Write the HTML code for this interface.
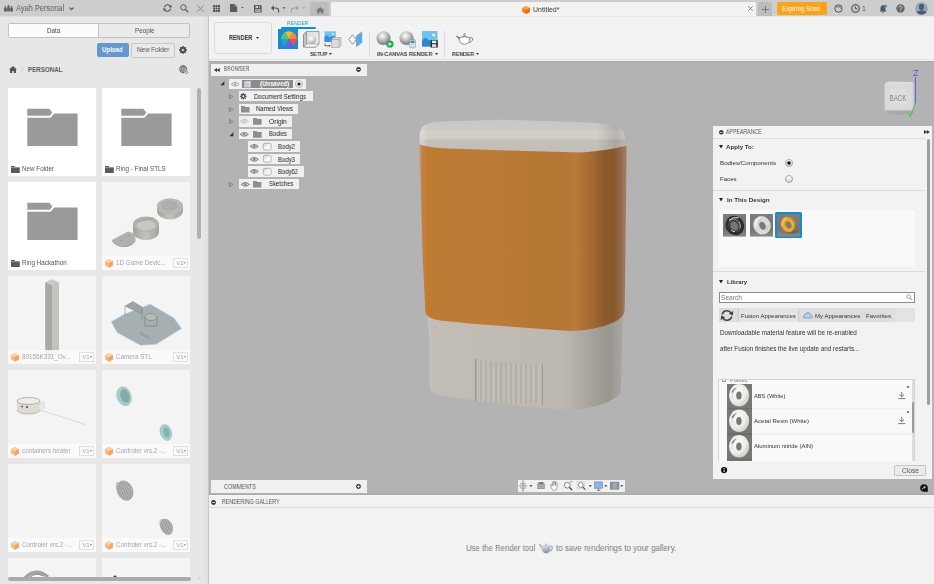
<!DOCTYPE html>
<html><head><meta charset="utf-8">
<style>
*{box-sizing:border-box;margin:0;padding:0}
html,body{width:934px;height:584px;overflow:hidden;background:#b3b3b3;font-family:"Liberation Sans",sans-serif;color:#333}
.a{position:absolute}
svg{position:absolute;overflow:visible}
.t,.lbl,.rt{will-change:transform}
.t{position:absolute;white-space:nowrap;line-height:1}
#top{left:0;top:0;width:934px;height:16px;background:#cdcdcd;box-shadow:0 1px 0 rgba(0,0,0,0.045)}
#left{left:0;top:16px;width:209px;height:568px;background:linear-gradient(to right,#e7e7e7 0,#e7e7e7 202px,#e0e0e0 208px);border-right:1px solid #c6c6c6}
#tb{left:209px;top:16px;width:725px;height:44px;background:#f2f2f2}
#vp{left:209px;top:61px;width:725px;height:434px;background:#b3b3b3}
#gal{left:209px;top:495px;width:725px;height:89px;background:#f2f2f2;border-top:1px solid #f7f7f7}
.card{position:absolute;width:88px;height:88px;background:#fff}
.card.f{background:#f4f4f4}
.card .strip{position:absolute;left:0;top:74px;width:88px;height:14px;background:#fafafa}
.lbl{position:absolute;left:14px;top:78px;font-size:6.3px;color:#444;white-space:nowrap;line-height:1}
.card.f .lbl{color:#a6a6a6}
.ver{position:absolute;left:70.6px;top:76.2px;width:15.2px;height:9.6px;border:1px solid #e0e0e0;background:#fafafa;font-size:6.2px;color:#a8a8a8;line-height:7.6px;padding-left:2.2px;will-change:transform}
.ver:after{content:"";position:absolute;right:1.6px;top:3px;border-left:1.8px solid transparent;border-right:1.8px solid transparent;border-top:2.6px solid #8a8a8a}
</style></head><body>
<!-- TOP BAR -->
<div id="top" class="a">
  <svg style="left:3.9px;top:4.6px" width="9" height="6.4" viewBox="0 0 9 6.4"><g fill="#5e5e5e"><circle cx="1.4" cy="2" r="0.95"/><circle cx="4.5" cy="1" r="1"/><circle cx="7.6" cy="2" r="0.95"/><path d="M0 3.6 Q0 3 0.6 3 H2.2 Q2.8 3 2.8 3.6 V6.4 H0 Z"/><path d="M3.1 2.6 Q3.1 2.1 3.6 2.1 H5.4 Q5.9 2.1 5.9 2.6 V6.4 H3.1 Z"/><path d="M6.2 3.6 Q6.2 3 6.8 3 H8.4 Q9 3 9 3.6 V6.4 H6.2 Z"/></g></svg>
  <div class="t" style="left:16.2px;top:3.6px;font-size:8.4px;color:#5c5c5c;transform:scaleX(0.885);transform-origin:0 0">Ayah Personal</div>
  <svg style="left:69px;top:6.5px" width="5" height="3.5" viewBox="0 0 5 3.5"><path d="M0.5 0.5 L2.5 2.7 L4.5 0.5" fill="none" stroke="#606060" stroke-width="1.2"/></svg>
  <!-- refresh -->
  <svg style="left:163px;top:4px" width="9" height="8" viewBox="0 0 9 8"><path d="M1.3 3.3 A3.3 3.3 0 0 1 7.5 2.6 M7.7 4.7 A3.3 3.3 0 0 1 1.5 5.4" fill="none" stroke="#555" stroke-width="1.1"/><path d="M8.6 1 L8.4 4 L5.8 3 Z M0.4 7 L0.6 4 L3.2 5 Z" fill="#555"/></svg>
  <!-- search -->
  <svg style="left:179.5px;top:4px" width="9" height="9" viewBox="0 0 9 9"><circle cx="3.4" cy="3.4" r="2.7" fill="none" stroke="#555" stroke-width="1"/><path d="M5.4 5.4 L8.2 8.2" stroke="#555" stroke-width="1.3"/></svg>
  <!-- close -->
  <svg style="left:197px;top:4.8px" width="7" height="7" viewBox="0 0 7 7"><path d="M0.3 0.3 L6.7 6.7 M6.7 0.3 L0.3 6.7" stroke="#777" stroke-width="0.8"/></svg>
  <!-- grid icon -->
  <svg style="left:213px;top:4.5px" width="7" height="7" viewBox="0 0 7 7"><g fill="#555"><rect x="0" y="0" width="2" height="2"/><rect x="2.5" y="0" width="2" height="2"/><rect x="5" y="0" width="2" height="2"/><rect x="0" y="2.5" width="2" height="2"/><rect x="2.5" y="2.5" width="2" height="2"/><rect x="5" y="2.5" width="2" height="2"/><rect x="0" y="5" width="2" height="2"/><rect x="2.5" y="5" width="2" height="2"/><rect x="5" y="5" width="2" height="2"/></g></svg>
  <!-- file icon -->
  <svg style="left:230px;top:4.2px" width="14" height="8.5" viewBox="0 0 14 8.5"><path d="M0 0 H4.5 L7.2 2.7 V8.1 H0 Z" fill="#5a5a5a"/><path d="M4.5 0 V2.7 H7.2" fill="#8a8a8a"/><path d="M11 2.9 H13.8 L12.4 4.5 Z" fill="#555"/></svg>
  <!-- save -->
  <svg style="left:253.7px;top:4.9px" width="8" height="7.5" viewBox="0 0 8 7.5"><path d="M0 0 H6.6 L7.7 1.1 V7.5 H0 Z" fill="#5a5a5a"/><rect x="1.6" y="0.9" width="4.2" height="2.1" fill="#cdcdcd"/><rect x="4" y="1.1" width="1.2" height="1.7" fill="#5a5a5a"/><rect x="1.3" y="4.2" width="5.2" height="2.5" fill="#cdcdcd"/><rect x="2.3" y="4.9" width="3.2" height="1.2" fill="#8a8a8a"/></svg>
  <!-- undo -->
  <svg style="left:270.8px;top:4.8px" width="16" height="8" viewBox="0 0 16 8"><path d="M1.8 3 H5 Q7.6 3 7.6 5.6 V7.6" fill="none" stroke="#555" stroke-width="1.2"/><path d="M0 3 L2.8 0.3 V5.7 Z" fill="#555"/><path d="M11.2 2.3 H14.4 L12.8 4 Z" fill="#555"/></svg>
  <!-- redo -->
  <svg style="left:291px;top:4.8px" width="16" height="8" viewBox="0 0 16 8"><path d="M6 3 H2.8 Q0.4 3 0.4 5.6 V7.4" fill="none" stroke="#9d9d9d" stroke-width="1.1"/><path d="M7.6 3 L4.9 0.4 V5.6 Z" fill="#9d9d9d"/><path d="M11.4 2.3 H14.4 L12.9 4 Z" fill="#9d9d9d"/></svg>
  <!-- home button -->
  <div class="a" style="left:309.5px;top:2.2px;width:19.5px;height:13.8px;background:#bcbcbc;border-radius:1.5px 1.5px 0 0"></div>
  <svg style="left:316.2px;top:7px" width="8.5" height="6.8" viewBox="0 0 8.5 6.8"><path d="M4.25 0 L8.5 3.4 H7.3 V6.8 H5.2 V4.9 H3.3 V6.8 H1.2 V3.4 H0 Z" fill="#787878"/></svg>
  <!-- document tab -->
  <div class="a" style="left:331.3px;top:2px;width:424.7px;height:14px;background:#f2f2f2;border-radius:2px 2px 0 0"></div>
  <svg style="left:522px;top:6px" width="8" height="8" viewBox="0 0 8 8"><path d="M4 0 L7.8 2 V6 L4 8 L0.2 6 V2 Z" fill="#ff7a1a"/><path d="M4 0 L7.8 2 L4 4 L0.2 2 Z" fill="#ffa455"/><path d="M4 4 L7.8 2 V6 L4 8 Z" fill="#f06a0a"/></svg>
  <div class="t" style="left:533px;top:6px;font-size:7px;color:#3a3a3a">Untitled*</div>
  <svg style="left:748px;top:6.4px" width="5" height="5" viewBox="0 0 5 5"><path d="M0.3 0.3 L4.7 4.7 M4.7 0.3 L0.3 4.7" stroke="#707070" stroke-width="0.85"/></svg>
  <!-- plus -->
  <div class="a" style="left:758px;top:2px;width:14px;height:14px;background:#bdbdbd;border-radius:1.5px 1.5px 0 0"></div>
  <svg style="left:761.5px;top:5.5px" width="7" height="7" viewBox="0 0 7 7"><path d="M3.5 0 V7 M0 3.5 H7" stroke="#777" stroke-width="1"/></svg>
  <!-- Expiring soon -->
  <div class="a" style="left:777px;top:2px;width:50px;height:12.5px;background:#f9a31c;border-radius:2px"></div>
  <div class="t" style="left:782.3px;top:5.6px;font-size:6.6px;color:#fff;transform:scaleX(0.93);transform-origin:0 0">Expiring Soon</div>
  <!-- right icons -->
  <svg style="left:833.5px;top:4px" width="9" height="9" viewBox="0 0 9 9"><circle cx="4.5" cy="4.5" r="3.7" fill="none" stroke="#555" stroke-width="1"/><path d="M2 2.5 Q3.5 4 5.5 2 Q6 4.5 7.5 5" fill="none" stroke="#555" stroke-width="0.8"/></svg>
  <svg style="left:850.5px;top:4px" width="9" height="9" viewBox="0 0 9 9"><circle cx="4.5" cy="4.5" r="3.8" fill="#b9b9b9" stroke="#6a6a6a" stroke-width="1.3"/><circle cx="4.5" cy="4.5" r="2.3" fill="#d5d5d5"/><path d="M4.3 2.4 V4.8 H6.4" fill="none" stroke="#444" stroke-width="1"/></svg>
  <div class="t" style="left:861.5px;top:5.3px;font-size:7px;color:#555">1</div>
  <svg style="left:878.5px;top:3.5px" width="9" height="9" viewBox="0 0 9 9"><path d="M4 1 Q1.5 1.5 1.5 4.5 V6.5 L0.5 7.5 H7.5 L6.5 6.5 V4.5 Q6.5 1.5 4 1 Z" fill="#555"/><circle cx="4" cy="8.3" r="0.8" fill="#555"/><circle cx="6.5" cy="2" r="1.5" fill="#1e9be6"/></svg>
  <svg style="left:895.5px;top:4px" width="9" height="9" viewBox="0 0 9 9"><circle cx="4.5" cy="4.5" r="4.2" fill="#666"/><path d="M3 3.4 Q3 2 4.5 2 Q6 2 6 3.3 Q6 4.2 4.6 4.8 V5.6" fill="none" stroke="#cdcdcd" stroke-width="1"/><circle cx="4.6" cy="7" r="0.6" fill="#cdcdcd"/></svg>
  <svg style="left:914.5px;top:2px" width="13" height="13" viewBox="0 0 13 13"><defs><clipPath id="av"><circle cx="6.5" cy="6.5" r="6.2"/></clipPath><radialGradient id="avg" cx="0.5" cy="0.4" r="0.6"><stop offset="0" stop-color="#a9b8cc"/><stop offset="1" stop-color="#8799b3"/></radialGradient></defs><circle cx="6.5" cy="6.5" r="6.2" fill="url(#avg)"/><g clip-path="url(#av)" fill="#4d5b72"><ellipse cx="6.5" cy="5" rx="2.6" ry="3.3"/><path d="M0.5 13.5 Q1 8.6 6.5 8.6 Q12 8.6 12.5 13.5 Z"/></g></svg>
</div>

<!-- LEFT PANEL -->
<div id="left" class="a">
  <div class="a" style="left:8px;top:7px;width:182px;height:14.5px;border:1px solid #c2c2c2;border-radius:2px;background:#ebebeb"></div>
  <div class="a" style="left:9px;top:8px;width:90px;height:12.5px;background:#fcfcfc;border-right:1px solid #c2c2c2"></div>
  <div class="t" style="left:47px;top:12px;font-size:6.3px;color:#444">Data</div>
  <div class="t" style="left:135px;top:12px;font-size:6.3px;color:#555">People</div>
  <div class="a" style="left:97px;top:26.8px;width:31.5px;height:14.6px;background:#6598cd;border-radius:2px"></div>
  <div class="t" style="left:102.4px;top:31.2px;font-size:6.9px;color:#fff;font-weight:bold;transform:scaleX(0.885);transform-origin:0 0">Upload</div>
  <div class="a" style="left:131px;top:26.5px;width:44px;height:15.3px;border:1px solid #c9c9c9;border-radius:2px;background:#e9e9e9"></div>
  <div class="t" style="left:137.2px;top:31.4px;font-size:6.6px;color:#555;transform:scaleX(0.95);transform-origin:0 0">New Folder</div>
  <!-- gear -->
  <svg style="left:179.2px;top:29.9px" width="8" height="8" viewBox="0 0 9 9"><g fill="#4a4a4a"><circle cx="4.5" cy="4.5" r="3.4"/><rect x="3.7" y="0" width="1.6" height="9"/><rect x="0" y="3.7" width="9" height="1.6"/><rect x="3.7" y="0" width="1.6" height="9" transform="rotate(45 4.5 4.5)"/><rect x="3.7" y="0" width="1.6" height="9" transform="rotate(-45 4.5 4.5)"/></g><circle cx="4.5" cy="4.5" r="1.5" fill="#e7e7e7"/><circle cx="4.5" cy="4.5" r="0.7" fill="#4a4a4a"/></svg>
  <!-- home + chevron + PERSONAL -->
  <svg style="left:8.5px;top:50px" width="8" height="7" viewBox="0 0 8 7"><path d="M4 0 L8 3.5 H7 V7 H4.8 V5 H3.2 V7 H1 V3.5 H0 Z" fill="#555"/></svg>
  <svg style="left:20px;top:50px" width="4" height="7" viewBox="0 0 4 7"><path d="M0.5 0.5 L3.2 3.5 L0.5 6.5" fill="none" stroke="#c4c4c4" stroke-width="0.9"/></svg>
  <div class="t" style="left:28px;top:50.6px;font-size:6.8px;font-weight:bold;color:#555;transform:scaleX(0.915);transform-origin:0 0">PERSONAL</div>
  <!-- globe -->
  <svg style="left:178.5px;top:49.3px" width="9.5" height="9.5" viewBox="0 0 9.5 9.5"><circle cx="4.2" cy="4.2" r="3.6" fill="none" stroke="#555" stroke-width="0.8"/><path d="M0.6 4.2 H7.8 M4.2 0.6 V7.8 M1.1 2.4 H7.3 M1.1 6 H7.3" stroke="#555" stroke-width="0.55"/><ellipse cx="4.2" cy="4.2" rx="1.7" ry="3.6" fill="none" stroke="#555" stroke-width="0.55"/><circle cx="7.3" cy="7.3" r="2" fill="#e7e7e7"/><path d="M5.8 7.3 L7.3 8.8 L8.8 7.3 L7.3 5.8 Z" fill="none" stroke="#555" stroke-width="0.7"/></svg>
  <!-- vertical scrollbar -->
  <div class="a" style="left:197px;top:72px;width:4px;height:151px;background:#b1b1b1;border-radius:2px"></div>
  <!-- horizontal scrollbar -->
</div>
<!-- CARDS -->
<div class="card" style="left:8px;top:88px">
  <svg style="left:0;top:0" width="88" height="88" viewBox="0 0 88 88"><g fill="#9a9a9a"><path d="M19.3 20.8 H41.3 L44.4 24.4 L41.9 27.8 H19.3 Z"/><path d="M19.3 29.7 H42.5 L46.2 25.5 H69.6 V57.9 H19.3 Z"/></g></svg>
  <svg style="left:3px;top:77.5px" width="9" height="7" viewBox="0 0 9 7"><path d="M0 0 H3.5 L4.3 1 H8.8 V7 H0 Z" fill="#5a5a5a"/><path d="M0 1.6 H8.8" stroke="#fff" stroke-width="0.4"/></svg>
  <div class="lbl" style="top:78.2px;color:#555">New Folder</div>
</div>
<div class="card" style="left:102px;top:88px">
  <svg style="left:0;top:0" width="88" height="88" viewBox="0 0 88 88"><g fill="#9a9a9a"><path d="M19.3 20.8 H41.3 L44.4 24.4 L41.9 27.8 H19.3 Z"/><path d="M19.3 29.7 H42.5 L46.2 25.5 H69.6 V57.9 H19.3 Z"/></g></svg>
  <svg style="left:3px;top:77.5px" width="9" height="7" viewBox="0 0 9 7"><path d="M0 0 H3.5 L4.3 1 H8.8 V7 H0 Z" fill="#5a5a5a"/><path d="M0 1.6 H8.8" stroke="#fff" stroke-width="0.4"/></svg>
  <div class="lbl" style="top:78.2px;color:#555">Ring - Final STLS</div>
</div>
<div class="card" style="left:8px;top:182px">
  <svg style="left:0;top:0" width="88" height="88" viewBox="0 0 88 88"><g fill="#9a9a9a"><path d="M19.3 20.8 H41.3 L44.4 24.4 L41.9 27.8 H19.3 Z"/><path d="M19.3 29.7 H42.5 L46.2 25.5 H69.6 V57.9 H19.3 Z"/></g></svg>
  <svg style="left:3px;top:77.5px" width="9" height="7" viewBox="0 0 9 7"><path d="M0 0 H3.5 L4.3 1 H8.8 V7 H0 Z" fill="#5a5a5a"/><path d="M0 1.6 H8.8" stroke="#fff" stroke-width="0.4"/></svg>
  <div class="lbl" style="top:78.2px;color:#555">Ring Hackathon</div>
</div>
<div class="card f" style="left:102px;top:182px">
  <svg style="left:0;top:0" width="88" height="88" viewBox="0 0 88 88">
    <defs><linearGradient id="gg" x1="0" y1="0" x2="1" y2="0"><stop offset="0" stop-color="#a3a29e"/><stop offset="0.5" stop-color="#c3c2bd"/><stop offset="1" stop-color="#a2a19d"/></linearGradient></defs>
    <path d="M55 25 A13 8 0 0 1 81 24 L81 28 A13 9 0 0 1 55 29 Z" fill="url(#gg)"/>
    <ellipse cx="68" cy="24.5" rx="13" ry="8" fill="#b9b8b4"/>
    <ellipse cx="67.5" cy="23.5" rx="8.5" ry="5.2" fill="#aeada9"/>
    <path d="M31 42 V50 A13 8 0 0 0 57 50 V42 Z" fill="url(#gg)"/>
    <ellipse cx="44" cy="42" rx="13" ry="7.5" fill="#b2b1ad"/>
    <ellipse cx="44" cy="43.5" rx="9.5" ry="5" fill="#c8c7c2"/>
    <path d="M35 40 L52 35.5" stroke="#8f8e8a" stroke-width="0.5"/>
    <path d="M10 58 L26 49.5 Q34 51 33.5 57 Q31 63 22 63.8 Q14 63.5 10 58 Z" fill="#b1b0ac"/>
    <path d="M10 58 Q14 63.5 22 63.8 Q31 63 33.5 57 L33.5 58.5 Q31 64.8 22 65 Q13 64.5 10 59 Z" fill="#959490"/>
    <circle cx="19.5" cy="58.5" r="0.6" fill="#777"/><path d="M26 54 L27.5 52.5 L28 54.5 Z" fill="#888"/>
  </svg>
  <div class="strip"></div>
  <svg style="left:3px;top:77px" width="8" height="9" viewBox="0 0 8 9"><path d="M4 0 L7.8 2.1 V6.6 L4 8.7 L0.2 6.6 V2.1 Z" fill="#fcb67c"/><path d="M4 0 L7.8 2.1 L4 4.3 L0.2 2.1 Z" fill="#fed3ab"/><path d="M4 4.3 L7.8 2.1 V6.6 L4 8.7 Z" fill="#f8a060"/></svg>
  <div class="lbl" style="top:77.6px">1D Game Devic...</div>
  <div class="ver">V2</div>
</div>
<div class="card f" style="left:8px;top:276px">
  <svg style="left:0;top:0" width="88" height="88" viewBox="0 0 88 88">
    <path d="M37.4 6.5 L44 3.5 L51 6.5 V80 H37.4 Z" fill="#b5b4b0"/>
    <path d="M37.4 6.5 L44 9.5 V80 H37.4 Z" fill="#a9a8a4"/>
    <path d="M44 9.5 L51 6.5 V80 H44 Z" fill="#c4c3bf"/>
    <path d="M37.4 6.5 L44 3.5 L51 6.5 L44 9.5 Z" fill="#c9c8c4"/>
  </svg>
  <div class="strip" style="background:rgba(250,250,250,0.9)"></div>
  <svg style="left:3px;top:77px" width="8" height="9" viewBox="0 0 8 9"><path d="M4 0 L7.8 2.1 V6.6 L4 8.7 L0.2 6.6 V2.1 Z" fill="#fcb67c"/><path d="M4 0 L7.8 2.1 L4 4.3 L0.2 2.1 Z" fill="#fed3ab"/><path d="M4 4.3 L7.8 2.1 V6.6 L4 8.7 Z" fill="#f8a060"/></svg>
  <div class="lbl" style="top:77.6px">89155K331_Ov...</div>
  <div class="ver">V1</div>
</div>
<div class="card f" style="left:102px;top:276px">
  <svg style="left:0;top:0" width="88" height="88" viewBox="0 0 88 88">
    <path d="M9.3 45.8 L23 38 L48.3 28.3 L71.7 41.9 L79.5 52.6 L54 68.2 L38.6 69.2 L15.2 56.5 Z" fill="#a6afb1" stroke="#9fd0e6" stroke-width="0.6"/>
    <path d="M23 30 L31 25.5 L40 31 V38 L31 34 Z" fill="#9fa1a2" stroke="#7d8080" stroke-width="0.4"/>
    <path d="M23 30 V40 M40 31 V44" stroke="#7d8080" stroke-width="0.5"/>
    <ellipse cx="49" cy="41" rx="6" ry="3.5" fill="#b9bbbb" stroke="#6f7272" stroke-width="0.5"/>
    <path d="M43 41 V50 H55 V41" fill="none" stroke="#6f7272" stroke-width="0.5"/>
    <path d="M38 56 L48 61 M38 58 L48 63" stroke="#7d8080" stroke-width="0.5"/>
  </svg>
  <div class="strip"></div>
  <svg style="left:3px;top:77px" width="8" height="9" viewBox="0 0 8 9"><path d="M4 0 L7.8 2.1 V6.6 L4 8.7 L0.2 6.6 V2.1 Z" fill="#fcb67c"/><path d="M4 0 L7.8 2.1 L4 4.3 L0.2 2.1 Z" fill="#fed3ab"/><path d="M4 4.3 L7.8 2.1 V6.6 L4 8.7 Z" fill="#f8a060"/></svg>
  <div class="lbl" style="top:77.6px">Camera STL</div>
  <div class="ver">V1</div>
</div>
<div class="card f" style="left:8px;top:370px">
  <svg style="left:0;top:0" width="88" height="88" viewBox="0 0 88 88">
    <path d="M32 40 L78 54.6" stroke="#d2d2d2" stroke-width="0.8"/>
    <path d="M9 31 V40 A11.5 4 0 0 0 32 40 V31 Z" fill="#dedbd5"/>
    <ellipse cx="20.5" cy="31" rx="11.5" ry="3.5" fill="#eeece8" stroke="#8d8b86" stroke-width="0.6"/>
    <path d="M9 40 A11.5 4 0 0 0 32 40" fill="none" stroke="#9b9994" stroke-width="0.6"/>
    <rect x="32" y="31" width="5" height="8" fill="#e6e6e6"/>
    <circle cx="14" cy="36.5" r="0.9" fill="#555"/><circle cx="19" cy="37" r="1.1" fill="#555"/>
  </svg>
  <div class="strip"></div>
  <svg style="left:3px;top:77px" width="8" height="9" viewBox="0 0 8 9"><path d="M4 0 L7.8 2.1 V6.6 L4 8.7 L0.2 6.6 V2.1 Z" fill="#fcb67c"/><path d="M4 0 L7.8 2.1 L4 4.3 L0.2 2.1 Z" fill="#fed3ab"/><path d="M4 4.3 L7.8 2.1 V6.6 L4 8.7 Z" fill="#f8a060"/></svg>
  <div class="lbl" style="top:77.6px">containers heater</div>
  <div class="ver">V1</div>
</div>
<div class="card f" style="left:102px;top:370px">
  <svg style="left:0;top:0" width="88" height="88" viewBox="0 0 88 88">
    <ellipse cx="22" cy="26.3" rx="7.5" ry="10" transform="rotate(-20 22 26.3)" fill="#a3cdca"/>
    <ellipse cx="23" cy="26" rx="4.5" ry="7" transform="rotate(-20 23 26)" fill="#6f9593" opacity="0.6"/>
    <ellipse cx="63.9" cy="62.4" rx="6" ry="8.5" transform="rotate(-20 63.9 62.4)" fill="#a3cdca"/>
    <ellipse cx="64.5" cy="62.4" rx="3" ry="5" transform="rotate(-20 64.5 62.4)" fill="#6f9593" opacity="0.5"/>
  </svg>
  <div class="strip"></div>
  <svg style="left:3px;top:77px" width="8" height="9" viewBox="0 0 8 9"><path d="M4 0 L7.8 2.1 V6.6 L4 8.7 L0.2 6.6 V2.1 Z" fill="#fcb67c"/><path d="M4 0 L7.8 2.1 L4 4.3 L0.2 2.1 Z" fill="#fed3ab"/><path d="M4 4.3 L7.8 2.1 V6.6 L4 8.7 Z" fill="#f8a060"/></svg>
  <div class="lbl" style="top:77.6px">Controler vrs.2 -...</div>
  <div class="ver">V1</div>
</div>
<div class="card f" style="left:8px;top:464px">
  <div class="strip"></div>
  <svg style="left:3px;top:77px" width="8" height="9" viewBox="0 0 8 9"><path d="M4 0 L7.8 2.1 V6.6 L4 8.7 L0.2 6.6 V2.1 Z" fill="#fcb67c"/><path d="M4 0 L7.8 2.1 L4 4.3 L0.2 2.1 Z" fill="#fed3ab"/><path d="M4 4.3 L7.8 2.1 V6.6 L4 8.7 Z" fill="#f8a060"/></svg>
  <div class="lbl" style="top:77.6px">Controler vrs.2 -...</div>
  <div class="ver">V1</div>
</div>
<div class="card f" style="left:102px;top:464px">
  <svg style="left:0;top:0" width="88" height="88" viewBox="0 0 88 88">
    <defs><pattern id="gear" width="2.2" height="2.2" patternUnits="userSpaceOnUse"><rect width="2.2" height="2.2" fill="#9a9a9a"/><circle cx="1.1" cy="1.1" r="0.65" fill="#c9c9c9"/></pattern></defs>
    <ellipse cx="17.5" cy="24" rx="3" ry="6.5" transform="rotate(-25 17.5 24)" fill="#a9d3ea"/>
    <ellipse cx="23" cy="26.6" rx="8" ry="10.5" transform="rotate(-25 23 26.6)" fill="url(#gear)"/>
    <ellipse cx="62" cy="62" rx="4" ry="7.5" transform="rotate(-25 62 62)" fill="#a9d3ea"/>
    <ellipse cx="64.6" cy="62.8" rx="6" ry="8.5" transform="rotate(-25 64.6 62.8)" fill="url(#gear)"/>
  </svg>
  <div class="strip"></div>
  <svg style="left:3px;top:77px" width="8" height="9" viewBox="0 0 8 9"><path d="M4 0 L7.8 2.1 V6.6 L4 8.7 L0.2 6.6 V2.1 Z" fill="#fcb67c"/><path d="M4 0 L7.8 2.1 L4 4.3 L0.2 2.1 Z" fill="#fed3ab"/><path d="M4 4.3 L7.8 2.1 V6.6 L4 8.7 Z" fill="#f8a060"/></svg>
  <div class="lbl" style="top:77.6px">Controler vrs.2 -...</div>
  <div class="ver">V1</div>
</div>
<div class="card f" style="left:8px;top:558px;height:19px;overflow:hidden">
  <svg style="left:0;top:0" width="88" height="30" viewBox="0 0 88 30"><path d="M17 20 Q28 9 40 19" fill="none" stroke="#a3a29e" stroke-width="3.2"/><path d="M22 19 Q28 14 35 18" fill="none" stroke="#8c8b87" stroke-width="1"/></svg>
</div>
<div class="card f" style="left:102px;top:558px;height:19px;overflow:hidden">
  <svg style="left:0;top:0" width="88" height="30" viewBox="0 0 88 30"><ellipse cx="13" cy="18.5" rx="1.5" ry="1" fill="#444"/></svg>
</div>
<div class="a" style="left:8px;top:576.5px;width:183px;height:4.5px;background:#ababab;border-radius:2px"></div>
<div class="a" style="left:198px;top:577px;width:3px;height:3px;background:#dcdcdc"></div>


<!-- TOOLBAR -->
<div id="tb" class="a">
  <div class="a" style="left:5px;top:6px;width:57.5px;height:32px;border:1px solid #dadada;border-radius:2.5px"></div>
</div>
<div class="a" style="left:209px;top:59px;width:725px;height:1px;background:#e4e4e4"></div><div class="a" style="left:209px;top:60px;width:725px;height:1px;background:#f5f5f5"></div>
<div class="t" style="left:228.8px;top:34.6px;font-size:6.5px;color:#333;font-weight:bold;transform:scaleX(0.85);transform-origin:0 0">RENDER</div>
<svg style="left:255.5px;top:37.3px" width="3" height="2" viewBox="0 0 3 2"><path d="M0 0 H3 L1.5 2 Z" fill="#333"/></svg>
<div class="t" style="left:286.9px;top:19.6px;font-size:6.2px;color:#1f9ad8;transform:scaleX(0.82);transform-origin:0 0">RENDER</div>
<div class="a" style="left:281px;top:27px;width:34.5px;height:1.8px;background:#0a8fd6;border-radius:1px"></div>
<div class="a" style="left:278px;top:29px;width:20px;height:20px;background:#1a8ad4"></div>
<svg style="left:280.5px;top:31.3px" width="16" height="16" viewBox="-8 -8 16 16">
  <path d="M0 0 L-6.67 -3.85 A7.7 7.7 0 0 1 -3.85 -6.67 Z" fill="#5cc375"/>
  <path d="M0 0 L0 -7.7 A7.7 7.7 0 0 1 0 -7.7 Z" fill="#5cc375"/>
  <path d="M0 0 L-3.85 -6.67 A7.7 7.7 0 0 1 3.85 -6.67 Z" fill="#f8b832"/>
  <path d="M0 0 L3.85 -6.67 A7.7 7.7 0 0 1 7.7 0 Z" fill="#f5883a"/>
  <path d="M0 0 L7.7 0 A7.7 7.7 0 0 1 3.85 6.67 Z" fill="#e35454"/>
  <path d="M0 0 L3.85 6.67 A7.7 7.7 0 0 1 -3.85 6.67 Z" fill="#7d55e6"/>
  <path d="M0 0 L-3.85 6.67 A7.7 7.7 0 0 1 -7.7 0 Z" fill="#1fa9c0"/>
  <path d="M0 0 L-7.7 0 A7.7 7.7 0 0 1 -3.85 -6.67 Z" fill="#5cc375"/>
</svg>
<!-- sphere in box -->
<svg style="left:302.5px;top:30.5px" width="17" height="17" viewBox="0 0 17 17">
  <defs><radialGradient id="sph" cx="0.4" cy="0.35" r="0.7"><stop offset="0" stop-color="#fff"/><stop offset="0.6" stop-color="#d5d5d5"/><stop offset="1" stop-color="#9a9a9a"/></radialGradient>
  <linearGradient id="wall" x1="0" y1="0" x2="1" y2="1"><stop offset="0" stop-color="#d8d8d8"/><stop offset="1" stop-color="#f2f2f2"/></linearGradient></defs>
  <path d="M3.5 0.5 H16 V13 L13 16 H0.5 V3.5 Z" fill="url(#wall)" stroke="#6d6d6d" stroke-width="0.6"/>
  <path d="M0.5 3.5 L3.5 0.5 V13 L0.5 16 Z" fill="#c4c4c4" stroke="#6d6d6d" stroke-width="0.5"/>
  <path d="M3.5 13 H16 L13 16 H0.5 Z" fill="#fafafa" stroke="#6d6d6d" stroke-width="0.5"/>
  <circle cx="8.6" cy="8.5" r="4.4" fill="url(#sph)"/>
</svg>
<!-- image + cube -->
<svg style="left:324px;top:30.5px" width="18" height="17" viewBox="0 0 18 17">
  <rect x="0.5" y="0.3" width="11.2" height="10.7" fill="#6cc4f4"/>
  <path d="M0.5 6 Q2.5 3.5 4.5 5.5 Q6 7 8 5.5 Q10 4.5 11.7 6.5 V11 H0.5 Z" fill="#3b8fd2"/>
  <circle cx="8.8" cy="3" r="1.1" fill="#f8eea0"/>
  <path d="M7.5 8.5 L9.5 6.5 H17 V14.5 L15 16.5 H7.5 Z" fill="#dcdcdc" stroke="#8c8c8c" stroke-width="0.5"/>
  <path d="M7.5 8.5 H15 V16.5 M15 8.5 L17 6.5" fill="none" stroke="#8c8c8c" stroke-width="0.5"/>
  <path d="M1 12.5 V14.8 H5.5" fill="none" stroke="#333" stroke-width="0.7"/><path d="M5 13.8 L6.5 14.8 L5 15.8 Z" fill="#333"/>
</svg>
<!-- diamond + plane -->
<svg style="left:348px;top:30.5px" width="15" height="17" viewBox="0 0 15 17">
  <path d="M0.7 8.5 L4.5 3.8 L8.3 8.5 L4.5 13.2 Z" fill="#f4f4f4" stroke="#555" stroke-width="0.6"/>
  <path d="M8 5 L14.2 0.3 V11.8 L8 16.3 Z" fill="#62a9e0"/>
</svg>
<div class="t" style="left:309.8px;top:50.9px;font-size:6.1px;color:#3a3a3a;font-weight:bold;transform:scaleX(0.86);transform-origin:0 0">SETUP</div>
<svg style="left:328.5px;top:52.6px" width="3" height="2" viewBox="0 0 3 2"><path d="M0 0 H3 L1.5 2 Z" fill="#333"/></svg>
<div class="a" style="left:369px;top:31px;width:1px;height:26px;background:#dcdcdc"></div>
<!-- spheres -->
<svg style="left:375.5px;top:30.5px" width="17" height="17" viewBox="0 0 17 17">
  <defs><radialGradient id="sph2" cx="0.42" cy="0.32" r="0.7"><stop offset="0" stop-color="#ffffff"/><stop offset="0.35" stop-color="#d0d0d0"/><stop offset="0.8" stop-color="#8d8d8d"/><stop offset="1" stop-color="#9c9c9c"/></radialGradient></defs>
  <circle cx="7.5" cy="7.3" r="7" fill="url(#sph2)"/>
  <circle cx="13.9" cy="13.1" r="3.7" fill="#1fae4b"/>
  <path d="M12.6 11.2 L15.9 13.1 L12.6 15 Z" fill="#fff"/>
</svg>
<svg style="left:398.5px;top:30.5px" width="17" height="17" viewBox="0 0 17 17">
  <circle cx="7.5" cy="7.3" r="7" fill="url(#sph2)"/>
  <rect x="10.8" y="8.5" width="5.6" height="8.3" rx="0.8" fill="#eee" stroke="#777" stroke-width="0.5"/>
  <rect x="11.6" y="9.5" width="4" height="2.6" fill="#1e96e0"/>
  <path d="M12.5 13.5 H14.7 M12.5 15 H14.7" stroke="#777" stroke-width="0.4"/>
</svg>
<svg style="left:421.5px;top:30.5px" width="17" height="17" viewBox="0 0 17 17">
  <rect x="0" y="0" width="15.5" height="15.5" fill="#6cc4f4"/>
  <path d="M0 10 Q2.5 5 5.5 8 Q7 10 8.5 9 V15.5 H0 Z" fill="#2f87cd"/>
  <circle cx="11.7" cy="4" r="1.6" fill="#f8f0a8"/>
  <rect x="8.5" y="9.2" width="7.3" height="7.3" fill="#2a2a2a"/>
  <rect x="10" y="9.7" width="4.3" height="2.5" fill="#eee"/>
  <rect x="10" y="13.3" width="4.3" height="2.5" fill="#eee"/>
</svg>
<div class="t" style="left:376.8px;top:50.9px;font-size:6.1px;color:#3a3a3a;font-weight:bold;transform:scaleX(0.91);transform-origin:0 0">IN-CANVAS RENDER</div>
<svg style="left:434.7px;top:52.6px" width="3" height="2" viewBox="0 0 3 2"><path d="M0 0 H3 L1.5 2 Z" fill="#333"/></svg>
<div class="a" style="left:444px;top:31px;width:1px;height:26px;background:#dcdcdc"></div>
<!-- teapot -->
<svg style="left:456px;top:32.5px" width="18" height="12" viewBox="0 0 18 12">
  <path d="M3 4.5 Q2.5 10.5 8.5 11.3 Q14 10.8 13.8 4.5 Q8.5 3 3 4.5 Z" fill="#fff" stroke="#444" stroke-width="0.6"/>
  <path d="M3.3 5.5 Q0.5 4 0.5 3 Q2.5 3 3.5 6" fill="none" stroke="#444" stroke-width="0.6"/>
  <path d="M13.8 5 Q17.5 4 16.5 7 Q15.5 9 13 10" fill="none" stroke="#444" stroke-width="0.6"/>
  <path d="M6.5 3.8 Q8.5 1.5 10.5 3.8" fill="none" stroke="#444" stroke-width="0.6"/>
  <circle cx="8.5" cy="1.3" r="0.8" fill="none" stroke="#444" stroke-width="0.5"/>
</svg>
<div class="t" style="left:451.9px;top:50.9px;font-size:6.1px;color:#3a3a3a;font-weight:bold;transform:scaleX(0.86);transform-origin:0 0">RENDER</div>
<svg style="left:475.7px;top:52.6px" width="3" height="2" viewBox="0 0 3 2"><path d="M0 0 H3 L1.5 2 Z" fill="#333"/></svg>

<!-- VIEWPORT -->
<div id="vp" class="a"></div>
<div class="a" style="left:209px;top:61px;width:725px;height:1px;background:#a9a9a9"></div>
<!-- browser header -->
<div class="a" style="left:211px;top:63.5px;width:156px;height:12.3px;background:#f0f0f0"></div>
<svg style="left:213.5px;top:68px" width="6" height="4" viewBox="0 0 6 4"><path d="M0 2 L3 0 V4 Z M2.8 2 L5.8 0 V4 Z" fill="#333"/></svg>
<div class="t" style="left:223.7px;top:66.3px;font-size:6.3px;color:#555;transform:scaleX(0.78);transform-origin:0 0">BROWSER</div>
<svg style="left:355.6px;top:67.2px" width="5" height="5" viewBox="0 0 5 5"><circle cx="2.5" cy="2.5" r="2.4" fill="#333"/><rect x="1.1" y="2.1" width="2.8" height="0.8" fill="#fff"/></svg>
<!-- tree rows -->
<style>
.row{position:absolute;background:#f0f0f0;height:10.3px}
.rt{position:absolute;font-size:6.1px;color:#333;white-space:nowrap;line-height:1}
.eye{position:absolute}
</style>
<!-- root -->
<svg style="left:220px;top:81.2px" width="5" height="5" viewBox="0 0 5 5"><path d="M4.3 0.3 V4.3 H0.3 Z" fill="#333"/></svg>
<div class="row" style="left:229px;top:78.8px;width:77px;height:10.1px"></div>
<svg style="left:231px;top:81.8px" width="8.5" height="4.5" viewBox="0 0 8.5 4.5"><path d="M0.4 2.25 Q4.25 -1.4 8.1 2.25 Q4.25 5.9 0.4 2.25 Z" fill="none" stroke="#9a9a9a" stroke-width="0.9"/><circle cx="4.25" cy="2.25" r="1.1" fill="#9a9a9a"/></svg>
<div class="a" style="left:242px;top:80px;width:51px;height:7.7px;background:#8b8b8b"></div>
<svg style="left:244.2px;top:80.8px" width="7" height="6.5" viewBox="0 0 7 6.5"><path d="M1.2 0 H6.8 V5.3 L5.6 6.5 H0 V1.2 Z" fill="#c5cad6"/><path d="M0 1.2 H5.6 V6.5 M5.6 1.2 L6.8 0" fill="none" stroke="#eef0f5" stroke-width="0.5"/></svg>
<div class="t" style="left:259.6px;top:80.5px;font-size:6.7px;color:#fff;font-weight:bold;transform:scaleX(0.905);transform-origin:0 0">(Unsaved)</div>
<svg style="left:295.3px;top:79.7px" width="8" height="8" viewBox="0 0 8 8"><circle cx="4" cy="4" r="3.6" fill="#e8e8e8" stroke="#888" stroke-width="0.5"/><circle cx="4" cy="4" r="1.6" fill="#222"/></svg>
<!-- Document settings -->
<svg style="left:229.3px;top:94.3px" width="4.5" height="5" viewBox="0 0 4.5 5"><path d="M0.4 0.4 L4 2.5 L0.4 4.6 Z" fill="none" stroke="#666" stroke-width="0.6"/></svg>
<div class="row" style="left:238.6px;top:91.2px;width:74.3px"></div>
<svg style="left:240.4px;top:93.2px" width="6.6" height="6.6" viewBox="0 0 9 9"><g fill="#444"><circle cx="4.5" cy="4.5" r="3.1"/><rect x="3.8" y="0" width="1.4" height="9"/><rect x="0" y="3.8" width="9" height="1.4"/><rect x="3.8" y="0" width="1.4" height="9" transform="rotate(45 4.5 4.5)"/><rect x="3.8" y="0" width="1.4" height="9" transform="rotate(-45 4.5 4.5)"/></g><circle cx="4.5" cy="4.5" r="1.5" fill="#f0f0f0"/></svg>
<div class="rt" style="left:253.9px;top:93.74px;font-size:6.7px;color:#222;transform:scaleX(0.919);transform-origin:0 0">Document Settings</div>
<!-- Named Views -->
<svg style="left:229.3px;top:106.8px" width="4.5" height="5" viewBox="0 0 4.5 5"><path d="M0.4 0.4 L4 2.5 L0.4 4.6 Z" fill="none" stroke="#666" stroke-width="0.6"/></svg>
<div class="row" style="left:238.8px;top:104px;width:59.2px"></div>
<svg style="left:240.5px;top:105.8px" width="8.5" height="6.5" viewBox="0 0 8.5 6.5"><path d="M0 0 H3.5 L4.2 1 H8.5 V6.5 H0 Z" fill="#8e8e8e"/></svg>
<div class="rt" style="left:255.8px;top:106.24px;font-size:6.7px;color:#222;transform:scaleX(0.898);transform-origin:0 0">Named Views</div>
<!-- Origin -->
<svg style="left:229.3px;top:119.2px" width="4.5" height="5" viewBox="0 0 4.5 5"><path d="M0.4 0.4 L4 2.5 L0.4 4.6 Z" fill="none" stroke="#666" stroke-width="0.6"/></svg>
<div class="row" style="left:238.8px;top:116.3px;width:53.4px"></div>
<svg style="left:240px;top:119.2px" width="8.6" height="4.6" viewBox="0 0 8.6 4.6"><path d="M0.3 2.3 Q4.3 -1.5 8.3 2.3 Q4.3 6.1 0.3 2.3 Z" fill="none" stroke="#aaa" stroke-width="0.6"/><circle cx="4.3" cy="2.3" r="1.3" fill="none" stroke="#aaa" stroke-width="0.5"/><path d="M1.5 4.5 L7 0.2" stroke="#aaa" stroke-width="0.5"/></svg>
<svg style="left:253px;top:118px" width="8.6" height="6.8" viewBox="0 0 8.6 6.8"><path d="M0 0 H3.5 L4.2 1 H8.6 V6.8 H0 Z" fill="#8e8e8e"/></svg>
<div class="rt" style="left:268.8px;top:118.74px;font-size:6.7px;color:#222;transform:scaleX(0.974);transform-origin:0 0">Origin</div>
<!-- Bodies -->
<svg style="left:229px;top:131.5px" width="5" height="5" viewBox="0 0 5 5"><path d="M4.3 0.3 V4.3 H0.3 Z" fill="#333"/></svg>
<div class="row" style="left:238.8px;top:128.8px;width:53.4px"></div>
<svg style="left:240px;top:131.6px" width="8.6" height="4.6" viewBox="0 0 8.6 4.6"><path d="M0.5 2.3 Q4.3 -1.3 8.1 2.3 Q4.3 5.9 0.5 2.3 Z" fill="none" stroke="#858585" stroke-width="1.1"/><circle cx="4.3" cy="2.3" r="1.3" fill="#858585"/></svg>
<svg style="left:253px;top:130.5px" width="8.6" height="6.8" viewBox="0 0 8.6 6.8"><path d="M0 0 H3.5 L4.2 1 H8.6 V6.8 H0 Z" fill="#8e8e8e"/></svg>
<div class="rt" style="left:268.8px;top:131.24px;font-size:6.7px;color:#222;transform:scaleX(0.874);transform-origin:0 0">Bodies</div>
<!-- Body2/3/62 -->
<div class="row" style="left:247.9px;top:141px;width:51.8px;height:10.9px"></div>
<div class="row" style="left:247.9px;top:153.9px;width:51.8px;height:10.2px"></div>
<div class="row" style="left:247.9px;top:166.2px;width:55.9px;height:10.5px"></div>
<svg style="left:249.7px;top:144.2px" width="8.6" height="4.6" viewBox="0 0 8.6 4.6"><path d="M0.5 2.3 Q4.3 -1.3 8.1 2.3 Q4.3 5.9 0.5 2.3 Z" fill="none" stroke="#858585" stroke-width="1.1"/><circle cx="4.3" cy="2.3" r="1.3" fill="#858585"/></svg>
<svg style="left:249.7px;top:156.7px" width="8.6" height="4.6" viewBox="0 0 8.6 4.6"><path d="M0.5 2.3 Q4.3 -1.3 8.1 2.3 Q4.3 5.9 0.5 2.3 Z" fill="none" stroke="#858585" stroke-width="1.1"/><circle cx="4.3" cy="2.3" r="1.3" fill="#858585"/></svg>
<svg style="left:249.7px;top:169.2px" width="8.6" height="4.6" viewBox="0 0 8.6 4.6"><path d="M0.5 2.3 Q4.3 -1.3 8.1 2.3 Q4.3 5.9 0.5 2.3 Z" fill="none" stroke="#858585" stroke-width="1.1"/><circle cx="4.3" cy="2.3" r="1.3" fill="#858585"/></svg>
<svg style="left:262.7px;top:142.6px" width="8.4" height="7.4" viewBox="0 0 8.4 7.4"><defs><linearGradient id="bi" x1="0" y1="0" x2="1" y2="1"><stop offset="0" stop-color="#c9cdd6"/><stop offset="0.5" stop-color="#f5f5f7"/><stop offset="1" stop-color="#fff"/></linearGradient></defs><rect x="0.3" y="0.3" width="7.8" height="6.8" rx="1.5" fill="url(#bi)" stroke="#8d8d8d" stroke-width="0.6"/></svg>
<svg style="left:262.7px;top:155.2px" width="8.4" height="7.4" viewBox="0 0 8.4 7.4"><rect x="0.3" y="0.3" width="7.8" height="6.8" rx="1.5" fill="url(#bi)" stroke="#8d8d8d" stroke-width="0.6"/></svg>
<svg style="left:262.7px;top:167.7px" width="8.4" height="7.4" viewBox="0 0 8.4 7.4"><rect x="0.3" y="0.3" width="7.8" height="6.8" rx="1.5" fill="url(#bi)" stroke="#8d8d8d" stroke-width="0.6"/></svg>
<div class="rt" style="left:278.1px;top:144.24px;font-size:6.7px;color:#222;transform:scaleX(0.890);transform-origin:0 0">Body2</div>
<div class="rt" style="left:278.1px;top:156.74px;font-size:6.7px;color:#222;transform:scaleX(0.890);transform-origin:0 0">Body3</div>
<div class="rt" style="left:278.1px;top:169.24px;font-size:6.7px;color:#222;transform:scaleX(0.880);transform-origin:0 0">Body62</div>
<!-- Sketches -->
<svg style="left:229.3px;top:181.8px" width="4.5" height="5" viewBox="0 0 4.5 5"><path d="M0.4 0.4 L4 2.5 L0.4 4.6 Z" fill="none" stroke="#666" stroke-width="0.6"/></svg>
<div class="row" style="left:238.8px;top:179.2px;width:59.9px;height:9.9px"></div>
<svg style="left:240.5px;top:181.8px" width="8.6" height="4.6" viewBox="0 0 8.6 4.6"><path d="M0.5 2.3 Q4.3 -1.3 8.1 2.3 Q4.3 5.9 0.5 2.3 Z" fill="none" stroke="#858585" stroke-width="1.1"/><circle cx="4.3" cy="2.3" r="1.3" fill="#858585"/></svg>
<svg style="left:253.1px;top:180.6px" width="8.4" height="6.4" viewBox="0 0 8.4 6.4"><path d="M0 0 H3.5 L4.2 1 H8.4 V6.4 H0 Z" fill="#8e8e8e"/></svg>
<div class="rt" style="left:268.9px;top:181.24px;font-size:6.7px;color:#222;transform:scaleX(0.882);transform-origin:0 0">Sketches</div>

<!-- MODEL -->
<svg style="left:400px;top:110px" width="240" height="310" viewBox="400 110 240 310">
  <defs>
    <linearGradient id="org" gradientUnits="userSpaceOnUse" x1="419" y1="0" x2="627" y2="0">
      <stop offset="0" stop-color="#cf9f86"/><stop offset="0.015" stop-color="#c48140"/><stop offset="0.04" stop-color="#bf7b31"/><stop offset="0.1" stop-color="#bd7b35"/><stop offset="0.4" stop-color="#bb7b37"/><stop offset="0.66" stop-color="#b57533"/><stop offset="0.755" stop-color="#b97a3a"/><stop offset="0.83" stop-color="#a46a32"/><stop offset="0.89" stop-color="#8d5a29"/><stop offset="0.935" stop-color="#87582b"/><stop offset="0.97" stop-color="#946849"/><stop offset="1" stop-color="#a98068"/>
    </linearGradient>
    <linearGradient id="wht" gradientUnits="userSpaceOnUse" x1="426" y1="0" x2="623" y2="0">
      <stop offset="0" stop-color="#cbc9c7"/><stop offset="0.03" stop-color="#c2beb7"/><stop offset="0.4" stop-color="#bfbab2"/><stop offset="0.7" stop-color="#bcb7af"/><stop offset="0.85" stop-color="#a6a29b"/><stop offset="0.93" stop-color="#99958f"/><stop offset="1" stop-color="#aaa7a2"/>
    </linearGradient>
    <linearGradient id="cap" gradientUnits="userSpaceOnUse" x1="0" y1="120" x2="0" y2="152">
      <stop offset="0" stop-color="#c8c7c6"/><stop offset="0.3" stop-color="#cbcac8"/><stop offset="0.38" stop-color="#d3d0ca"/><stop offset="0.58" stop-color="#d1cdc6"/><stop offset="0.64" stop-color="#c4c0ba"/><stop offset="1" stop-color="#c2beb7"/>
    </linearGradient>
    <linearGradient id="capside" gradientUnits="userSpaceOnUse" x1="419" y1="0" x2="626" y2="0">
      <stop offset="0" stop-color="#d8d8d8" stop-opacity="0.6"/><stop offset="0.04" stop-color="#fff" stop-opacity="0"/><stop offset="0.86" stop-color="#000" stop-opacity="0"/><stop offset="0.95" stop-color="#000" stop-opacity="0.13"/><stop offset="1" stop-color="#000" stop-opacity="0.05"/>
    </linearGradient>
  </defs>
  <!-- bottom white -->
  <path d="M426.3 305 L429.6 340 L429.6 386 C430 392, 434 394.5, 441 395.5 L475 400.5 L545 408.5 C555 409.5, 570 409.5, 582 409 C600 406, 612 402, 620.8 393 L622.5 320 L624 305 Z" fill="url(#wht)"/>
  <!-- grille -->
  <path d="M475.5 359 L542.7 364.5 L542.7 405 L475.5 401 Z" fill="#c1bcb4"/>
  <g stroke="#a39f98" stroke-width="0.9">
    <path d="M481 360 V401.5 M486 360.5 V402 M491 361 V402.3 M496 361.3 V402.6 M501 361.7 V403 M506 362.1 V403.3 M511 362.5 V403.6 M516 362.9 V403.9 M521 363.3 V404.2 M526 363.7 V404.4 M531 364 V404.6 M536 364.3 V404.8"/>
  </g>
  <path d="M475.8 359 V401" stroke="#8e8a84" stroke-width="1"/>
  <path d="M542.3 364.5 V405" stroke="#8e8a84" stroke-width="0.9"/>
  <!-- orange body -->
  <path d="M419.3 143 L520 146 L625 145.5 Q626.7 146 626.7 148 L624.7 310 C624.5 318, 615 323, 600 327 C590 329.5, 580 331, 570 331 L475 324 L440 320.5 C430 319, 425.5 316, 425.3 310 L422.8 260 Z" fill="url(#org)"/>
  <!-- cap -->
  <path d="M419.5 138 C419.5 126, 425 122.5, 440 121.5 L500 119.8 L580 122 C605 123.5, 612 124, 618 127 C624 130, 625 134, 625.3 140 L625.3 146 C620 147.5, 600 151.5, 580 152.4 L500 150.2 L450 148.6 C435 148, 422 146, 419.5 144 Z" fill="url(#cap)"/>
  <path d="M419.5 138 C419.5 126, 425 122.5, 440 121.5 L500 119.8 L580 122 C605 123.5, 612 124, 618 127 C624 130, 625 134, 625.3 140 L625.3 146 C620 147.5, 600 151.5, 580 152.4 L500 150.2 L450 148.6 C435 148, 422 146, 419.5 144 Z" fill="url(#capside)"/>
</svg>

<!-- VIEW CUBE -->
<svg style="left:880px;top:68px;will-change:transform" width="45" height="52" viewBox="880 68 45 52">
  <ellipse cx="900" cy="112" rx="14" ry="3" fill="#a5a5a5" opacity="0.7"/>
  <path d="M884.6 84 L888 81.5 L913 82 L912.8 84.5 Z" fill="#dedede"/>
  <path d="M912.8 84 L914.5 82.5 V108.5 L912.8 110.4 Z" fill="#c9c9c9"/>
  <rect x="884.6" y="84" width="28.2" height="26.4" fill="#d9d9d9"/>
  <rect x="889.5" y="89" width="17.5" height="16.5" fill="#dcdee1"/>
  <text x="898" y="100.9" font-family="Liberation Sans" font-size="8.6" fill="#7b7f85" text-anchor="middle" transform="scale(0.72 1)" transform-origin="898 100">BACK</text>
  <path d="M915.4 77.4 V103.5" stroke="#5a62e0" stroke-width="1.1"/>
  <path d="M913.5 70.5 H918 L913.5 75.5 H918" fill="none" stroke="#5a62e0" stroke-width="0.9"/>
  <path d="M915.4 103.5 L910 117" stroke="#56c056" stroke-width="1.1"/>
  <path d="M908 112 L910 117 L912.5 112.5" fill="none" stroke="#56c056" stroke-width="0.8"/>
</svg>

<!-- APPEARANCE PANEL -->
<style>
.ap{font-size:6.1px;color:#333}
.swatch{position:absolute;background:#6f6f6f}
</style>
<div class="a" style="left:713px;top:125.8px;width:218.5px;height:353.5px;background:#f2f2f2"></div>
<div class="a" style="left:713px;top:138px;width:211.5px;height:1px;background:#dedede"></div>
<svg style="left:719.3px;top:129.8px" width="4.6" height="4.6" viewBox="0 0 5 5"><circle cx="2.5" cy="2.5" r="2.4" fill="#333"/><rect x="1.1" y="2.1" width="2.8" height="0.8" fill="#fff"/></svg>
<div class="t" style="left:726.3px;top:129.4px;font-size:6.3px;color:#555;transform:scaleX(0.829);transform-origin:0 0">APPEARANCE</div>
<svg style="left:923.5px;top:129.8px" width="6" height="4" viewBox="0 0 6 4"><path d="M0 0 L3 2 L0 4 Z M2.8 0 L5.8 2 L2.8 4 Z" fill="#333"/></svg>
<!-- outer scrollbar -->
<div class="a" style="left:926.8px;top:139px;width:3.3px;height:266px;background:#9d9d9d;border-radius:1.5px"></div>
<!-- Apply To -->
<svg style="left:718.7px;top:145.2px" width="4" height="3.4" viewBox="0 0 4 3.4"><path d="M0 0 H4 L2 3.4 Z" fill="#222"/></svg>
<div class="t" style="left:726.3px;top:143.9px;font-size:6.15px;color:#333;font-weight:bold">Apply To:</div>
<div class="t" style="left:720px;top:160.1px;font-size:6.22px;color:#333">Bodies/Components</div>
<svg style="left:785px;top:158.7px" width="8" height="8" viewBox="0 0 8 8"><defs><radialGradient id="rg" cx="0.5" cy="0.3" r="0.7"><stop offset="0" stop-color="#fff"/><stop offset="1" stop-color="#c8c8c8"/></radialGradient></defs><circle cx="4" cy="4" r="3.6" fill="url(#rg)" stroke="#777" stroke-width="0.5"/><circle cx="4" cy="4" r="1.8" fill="#111"/></svg>
<div class="t" style="left:720px;top:176.3px;font-size:6.1px;color:#333">Faces</div>
<svg style="left:785px;top:174.9px" width="8" height="8" viewBox="0 0 8 8"><circle cx="4" cy="4" r="3.6" fill="url(#rg)" stroke="#777" stroke-width="0.5"/></svg>
<div class="a" style="left:713px;top:190px;width:211.5px;height:1px;background:#dcdcdc"></div>
<!-- In This Design -->
<svg style="left:718.5px;top:197.7px" width="4" height="3.4" viewBox="0 0 4 3.4"><path d="M0 0 H4 L2 3.4 Z" fill="#222"/></svg>
<div class="t" style="left:726.6px;top:197px;font-size:6.23px;color:#333;font-weight:bold">In This Design</div>
<div class="a" style="left:718.5px;top:209.5px;width:196.8px;height:57.6px;background:#f9f9f9"></div>
<svg style="left:722.7px;top:213.9px" width="23" height="22.6" viewBox="0 0 23 22.6"><defs><linearGradient id="sw" x1="0" y1="0" x2="0" y2="1"><stop offset="0" stop-color="#7d7d7d"/><stop offset="0.7" stop-color="#747474"/><stop offset="1" stop-color="#8a8a8a"/></linearGradient></defs><rect width="23" height="22.6" fill="url(#sw)"/>
<ellipse cx="11.8" cy="11.5" rx="7.6" ry="8.4" transform="rotate(-30 11.8 11.5)" fill="none" stroke="#2e2e2e" stroke-width="3.2"/>
<ellipse cx="11.3" cy="12" rx="4.6" ry="5.6" transform="rotate(-30 11.3 12)" fill="none" stroke="#3a3a3a" stroke-width="1.6"/>
<path d="M6 6.5 Q10 2.5 15.5 3.8" fill="none" stroke="#eee" stroke-width="1"/><path d="M8 16 Q9.5 18 12 17.5" fill="none" stroke="#ddd" stroke-width="0.9"/><path d="M16 8 Q18 11 17 14" fill="none" stroke="#bbb" stroke-width="0.7"/></svg>
<svg style="left:749.6px;top:213.9px" width="23" height="22.6" viewBox="0 0 23 22.6"><rect width="23" height="22.6" fill="url(#sw)"/>
<ellipse cx="12" cy="11.3" rx="8.6" ry="9.4" transform="rotate(-25 12 11.3)" fill="#dcdad5"/>
<ellipse cx="12.5" cy="11.8" rx="3" ry="4.2" transform="rotate(-25 12.5 11.8)" fill="#7a7a7a"/>
<path d="M5.5 13 Q5 6 10 4" fill="none" stroke="#f4f3ef" stroke-width="1.6"/><path d="M7.5 8 Q9 6 11 6.5" fill="none" stroke="#b9b7b2" stroke-width="0.7"/><path d="M15 17 Q18 15 18.5 11" fill="none" stroke="#c2c0bb" stroke-width="1"/></svg>
<div class="a" style="left:774.9px;top:212px;width:26.9px;height:26.4px;background:#168ad0;border-radius:1.5px"></div>
<svg style="left:776.8px;top:213.9px" width="23.1" height="22.6" viewBox="0 0 23.1 22.6"><rect width="23.1" height="22.6" fill="url(#sw)"/><ellipse cx="15" cy="17.5" rx="7" ry="2.2" fill="#676767"/>
<ellipse cx="11" cy="10.5" rx="7" ry="8" transform="rotate(-25 11 10.5)" fill="#e39d1c"/>
<ellipse cx="11.5" cy="11" rx="2.6" ry="3.6" transform="rotate(-25 11.5 11)" fill="#7a7a7a"/>
<ellipse cx="11" cy="10.8" rx="4.6" ry="5.6" transform="rotate(-25 11 10.8)" fill="none" stroke="#f3be4a" stroke-width="0.9"/>
<path d="M5 12 Q4.5 6 9.5 3.5" fill="none" stroke="#f6c45a" stroke-width="1.1"/></svg>
<div class="a" style="left:713px;top:271.3px;width:211.5px;height:1px;background:#dcdcdc"></div>
<!-- Library -->
<svg style="left:718.5px;top:280px" width="4" height="3.4" viewBox="0 0 4 3.4"><path d="M0 0 H4 L2 3.4 Z" fill="#222"/></svg>
<div class="t" style="left:726.6px;top:279.8px;font-size:5.93px;color:#333;font-weight:bold">Library</div>
<div class="a" style="left:719px;top:292.4px;width:195.6px;height:10.3px;background:#fff;border:1px solid #8a8a8a"></div>
<div class="t" style="left:720.5px;top:295.2px;font-size:6.6px;color:#777">Search</div>
<svg style="left:906.3px;top:294.2px" width="6.5" height="6.5" viewBox="0 0 6.5 6.5"><circle cx="2.6" cy="2.6" r="2" fill="none" stroke="#777" stroke-width="0.6"/><path d="M4 4 L6.2 6.2" stroke="#777" stroke-width="0.8"/></svg>
<div class="a" style="left:719px;top:308px;width:195.6px;height:14.2px;background:#dddddd"></div>
<div class="a" style="left:738px;top:308px;width:61.4px;height:14.2px;background:#e4e4e4;border-left:1px solid #cfcfcf;border-right:1px solid #cfcfcf"></div>
<div class="a" style="left:895px;top:308px;width:19.6px;height:14.2px;background:#e3e3e3"></div>
<svg style="left:720.2px;top:308.6px" width="14" height="13" viewBox="0 0 14 13"><path d="M2.2 5.5 A5 5 0 0 1 11.2 4 M11.8 7.5 A5 5 0 0 1 2.8 9" fill="none" stroke="#444" stroke-width="1.5"/><path d="M13.3 2 L12.8 6.5 L8.8 4.8 Z M0.7 11 L1.2 6.5 L5.2 8.2 Z" fill="#444"/></svg>
<div class="t" style="left:741.3px;top:312.9px;font-size:6.03px;color:#333">Fusion Appearances</div>
<svg style="left:802.8px;top:311.8px" width="10" height="6.5" viewBox="0 0 10 6.5"><path d="M2 6 Q0.3 6 0.4 4.5 Q0.5 3 2 3 Q2.5 0.5 5 0.6 Q7.5 0.8 7.8 3 Q9.6 3.2 9.6 4.6 Q9.5 6 8 6 Z" fill="#b9cde8" stroke="#5c7fb3" stroke-width="0.6"/></svg>
<div class="t" style="left:814.8px;top:312.9px;font-size:6.07px;color:#333">My Appearances</div>
<div class="t" style="left:866.3px;top:312.9px;font-size:6.08px;color:#333">Favorites</div>
<div class="t" style="left:720px;top:329.5px;font-size:6.32px;color:#333">Downloadable material feature will be re-enabled</div>
<div class="t" style="left:720px;top:346.2px;font-size:6.31px;color:#333">after Fusion finishes the live update and restarts...</div>
<!-- list -->
<div class="a" style="left:718.4px;top:379.4px;width:196.4px;height:81.5px;background:#f9f9f9;border:1px solid #d2d2d2;border-bottom:none;overflow:hidden">
  <div class="t" style="left:11px;top:-3px;font-size:6px;color:#777">Plastic</div>
  <div class="a" style="left:3px;top:-1px;width:4px;height:2.5px;border:0.5px solid #999"></div>
  <div class="a" style="left:7.6px;top:3.6px;width:24.7px;height:80px;background:#777"></div>
  <div class="a" style="left:33.3px;top:27.5px;width:159px;height:1.3px;background:#f1f1f1"></div>
  <div class="a" style="left:33.3px;top:53px;width:159px;height:1.3px;background:#f1f1f1"></div>
  <div class="a" style="left:7.6px;top:27.5px;width:24.7px;height:1.3px;background:#6a6a6a"></div>
  <div class="a" style="left:7.6px;top:53px;width:24.7px;height:1.3px;background:#6a6a6a"></div>
  <div class="a" style="left:7.6px;top:78.4px;width:24.7px;height:1.3px;background:#6a6a6a"></div>
  <div class="a" style="left:192.6px;top:0;width:3.8px;height:81.5px;background:#dedede"></div>
  <div class="a" style="left:192.6px;top:21.9px;width:3.6px;height:31px;background:#9a9a9a;border-radius:1.5px"></div>
</div>
<svg style="left:727px;top:383.4px" width="25" height="77" viewBox="0 0 25 77">
  <defs><radialGradient id="tor" cx="0.4" cy="0.35" r="0.75"><stop offset="0" stop-color="#fdfcfa"/><stop offset="0.65" stop-color="#ebe9e4"/><stop offset="1" stop-color="#c4c2bd"/></radialGradient></defs>
  <g id="torus"><ellipse cx="12.1" cy="12.3" rx="10.1" ry="11.2" fill="url(#tor)"/><ellipse cx="11.9" cy="12.4" rx="2.7" ry="4" fill="#777"/><path d="M4.3 9.5 Q6 5.2 9.8 4.2 Q7.5 6.5 6.2 9.8 Z" fill="#8a8a8a"/><path d="M5.5 15 Q5 8 10.5 5.5" fill="none" stroke="#d2d0cb" stroke-width="0.7"/><path d="M14 20 Q19.5 18 20 11" fill="none" stroke="#cfcdc8" stroke-width="0.8"/></g>
  <use href="#torus" y="25.5"/>
  <use href="#torus" y="51"/>
</svg>
<div class="t" style="left:754.3px;top:393.9px;font-size:5.71px;color:#333">ABS (White)</div>
<div class="t" style="left:754.3px;top:418.3px;font-size:6.04px;color:#333">Acetal Resin (White)</div>
<div class="t" style="left:754.3px;top:444.2px;font-size:5.9px;color:#333">Aluminum nitride (AlN)</div>
<svg style="left:897.5px;top:392px" width="7.5" height="7" viewBox="0 0 7.5 7"><path d="M3.75 0 V4.5 M1.5 2.5 L3.75 4.7 L6 2.5 M0.3 6.6 H7.2" fill="none" stroke="#555" stroke-width="0.8"/></svg>
<svg style="left:897.5px;top:417px" width="7.5" height="7" viewBox="0 0 7.5 7"><path d="M3.75 0 V4.5 M1.5 2.5 L3.75 4.7 L6 2.5 M0.3 6.6 H7.2" fill="none" stroke="#555" stroke-width="0.8"/></svg>
<div class="a" style="left:907px;top:385.5px;width:2.2px;height:2.2px;background:#e02020;border-radius:50%"></div>
<div class="a" style="left:907px;top:410.5px;width:2.2px;height:2.2px;background:#e02020;border-radius:50%"></div>
<!-- footer -->
<svg style="left:721px;top:467.3px" width="6.2" height="6.2" viewBox="0 0 6 6"><circle cx="3" cy="3" r="3" fill="#111"/><rect x="2.55" y="2.5" width="0.9" height="2.5" fill="#fff"/><circle cx="3" cy="1.5" r="0.55" fill="#fff"/></svg>
<div class="a" style="left:894.3px;top:465px;width:31.3px;height:10.8px;background:#ebebeb;border:1px solid #c6c6c6;border-radius:1px"></div>
<div class="t" style="left:902px;top:468.1px;font-size:6.65px;color:#555">Close</div>

<!-- COMMENTS -->
<div class="a" style="left:210.5px;top:480px;width:156px;height:12.8px;background:#f0f0f0"></div>
<div class="t" style="left:223.6px;top:483.8px;font-size:6.3px;color:#555;transform:scaleX(0.871);transform-origin:0 0">COMMENTS</div>
<svg style="left:356px;top:484.4px" width="5" height="5" viewBox="0 0 5 5"><circle cx="2.5" cy="2.5" r="2.4" fill="#333"/><path d="M1.1 2.5 H3.9 M2.5 1.1 V3.9" stroke="#fff" stroke-width="0.8"/></svg>
<!-- NAV BAR -->
<div class="a" style="left:517.7px;top:479.8px;width:107.3px;height:12.2px;background:#f0f0f0"></div>
<svg style="left:517px;top:479px" width="110" height="14" viewBox="517 479 110 14">
  <g fill="none" stroke="#6a6a6a" stroke-width="0.6">
    <path d="M523 481 V491 M518.8 486 H527.2"/><path d="M520 484.3 Q523 482.8 526 484.3 M520 487.7 Q523 489.2 526 487.7"/>
  </g>
  <path d="M522 481.5 L523 480.5 L524 481.5 M522 490.5 L523 491.5 L524 490.5" fill="none" stroke="#6a6a6a" stroke-width="0.5"/>
  <path d="M529.5 485.2 H532.5 L531 487 Z" fill="#333"/>
  <rect x="537" y="483.5" width="8" height="5.5" rx="0.8" fill="#9a9a9a"/><rect x="538.5" y="482" width="5" height="2" fill="#7f7f7f"/><path d="M537 485.7 H545 M537 487.4 H545" stroke="#d0d0d0" stroke-width="0.45"/>
  <path d="M551 487 Q550 484.5 551.3 484.3 L552.3 486 V482.2 Q553.2 481.4 553.9 482.2 V485.3 V481.6 Q554.8 480.9 555.5 481.8 V485.3 V482.3 Q556.4 481.6 557.1 482.6 V487 Q557 490.6 554.2 490.6 Q552 490.5 551 487 Z" fill="#fafafa" stroke="#666" stroke-width="0.55"/>
  <circle cx="567.3" cy="485.2" r="2.9" fill="#fafafa" stroke="#555" stroke-width="0.7"/><path d="M569.4 487.3 L572.2 490.2" stroke="#222" stroke-width="1.1"/><path d="M571.2 480.6 V482.6 M570.2 481.6 H572.2" stroke="#666" stroke-width="0.45"/>
  <rect x="577.3" y="481.7" width="7.4" height="7" fill="none" stroke="#999" stroke-width="0.45" stroke-dasharray="0.9 0.6"/><circle cx="580.8" cy="485" r="2.5" fill="#fafafa" stroke="#555" stroke-width="0.6"/><path d="M582.6 486.8 L585.4 489.8" stroke="#222" stroke-width="1"/>
  <path d="M588.8 485.2 H591.8 L590.3 487 Z" fill="#333"/>
  <rect x="594.6" y="481.9" width="8" height="6.3" fill="#8db3e6" stroke="#4b73ad" stroke-width="0.5"/><path d="M596.8 490.3 H600.4 M598.6 488.2 V490.3" stroke="#555" stroke-width="0.7"/>
  <path d="M604.3 485.2 H607.3 L605.8 487 Z" fill="#333"/>
  <defs><linearGradient id="vs" x1="0" y1="0" x2="1" y2="0"><stop offset="0" stop-color="#7c8696"/><stop offset="0.5" stop-color="#a3abb6"/><stop offset="1" stop-color="#858e9b"/></linearGradient></defs>
  <rect x="610.2" y="482" width="8.8" height="7.4" fill="url(#vs)" stroke="#6b7380" stroke-width="0.4"/>
  <path d="M620.3 485.2 H623.3 L621.8 487 Z" fill="#333"/>
</svg>
<svg style="left:919.5px;top:483.8px" width="8" height="8" viewBox="0 0 8 8"><path d="M4 0.2 A3.8 3.8 0 0 0 0.2 4 A3.8 3.8 0 0 0 4 7.8 H7.8 V4 A3.8 3.8 0 0 0 4 0.2 Z" fill="#111"/><path d="M2.2 5.6 Q2.6 3.2 5.2 3.2 M4.2 2.2 L5.4 3.2 L4.2 4.3" fill="none" stroke="#fff" stroke-width="0.7"/></svg>

<!-- GALLERY -->
<div id="gal" class="a"></div>
<div class="a" style="left:209px;top:494px;width:725px;height:1px;background:#aaaaaa"></div><div class="a" style="left:209px;top:507px;width:725px;height:1px;background:#dcdcdc"></div>
<svg style="left:211.4px;top:499.6px" width="5" height="5" viewBox="0 0 5 5"><circle cx="2.5" cy="2.5" r="2.4" fill="#333"/><rect x="1.1" y="2.1" width="2.8" height="0.8" fill="#fff"/></svg>
<div class="t" style="left:221.7px;top:498.6px;font-size:6.3px;color:#555;transform:scaleX(0.841);transform-origin:0 0">RENDERING GALLERY</div>
<div class="t" style="left:465.6px;top:543.9px;font-size:8.4px;color:#787878;transform:scaleX(0.93);transform-origin:0 0">Use the Render tool</div>
<svg style="left:539px;top:542px" width="14" height="12" viewBox="0 0 14 12"><defs><linearGradient id="tp" x1="0" y1="0" x2="0.3" y2="1"><stop offset="0" stop-color="#e3e8ef"/><stop offset="0.5" stop-color="#b3bccb"/><stop offset="1" stop-color="#8791a3"/></linearGradient></defs>
<path d="M0.5 2.2 L3 5.5 L3 7" fill="none" stroke="#9aa4b4" stroke-width="1.3"/>
<path d="M10.5 4 Q13.8 3.8 13.3 6.5 Q12.8 8.5 10.5 9.2" fill="none" stroke="#9aa4b4" stroke-width="1.1"/>
<path d="M2.5 4.2 Q7 2.6 11.5 4.2 Q12 10.5 7 11.5 Q2 10.5 2.5 4.2 Z" fill="url(#tp)"/>
<ellipse cx="7" cy="3.8" rx="3" ry="1.1" fill="#c9d0da"/><ellipse cx="7" cy="2.2" rx="1" ry="0.8" fill="#a7b0be"/></svg>
<div class="t" style="left:555.7px;top:543.9px;font-size:8.4px;color:#787878;transform:scaleX(0.958);transform-origin:0 0">to save renderings to your gallery.</div>

<div class="a" style="left:0;top:16px;width:934px;height:1px;background:rgba(0,0,0,0.04)"></div>
</body></html>
